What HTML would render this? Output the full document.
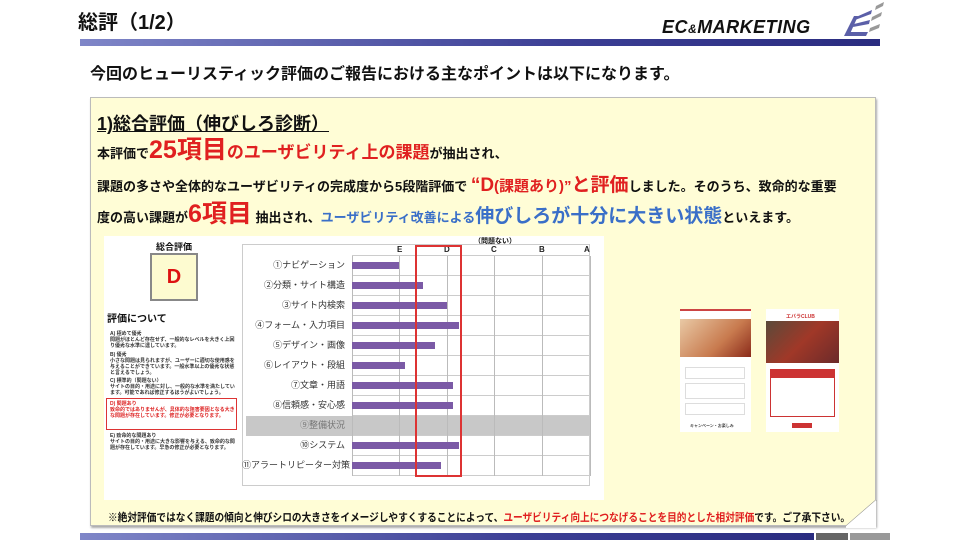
<!DOCTYPE html>
<html><head><meta charset="utf-8"><style>
*{margin:0;padding:0;box-sizing:border-box}
body{width:960px;height:540px;background:#fff;position:relative;overflow:hidden;font-family:"Liberation Sans","Noto Sans CJK JP",sans-serif;font-weight:bold;color:#111}
.a{position:absolute;white-space:nowrap}
.r{color:#e02020}.b{color:#3a6fc8}
.lg{position:absolute;left:110px;font-size:5px;line-height:6px;font-weight:bold;color:#333;width:126px;white-space:normal}
.lbl{position:absolute;left:242px;width:103px;font-size:9px;font-weight:normal;color:#333;text-align:right;line-height:12px;white-space:nowrap}
.bar{position:absolute;left:352px;height:7px;background:#7b5aa6}
.vl{position:absolute;top:256px;width:1px;height:220px;background:#bbb}
.hl{position:absolute;left:352px;width:238px;height:1px;background:#ccc}
.cl{position:absolute;top:245px;font-size:8px;color:#222}
</style></head><body>
<div class="a" style="left:78px;top:6px;font-size:20px">総評（1/2）</div>
<div class="a" style="left:662px;top:17px;font-size:18px;font-style:italic;letter-spacing:0.5px">EC<span style="font-size:12px">&amp;</span>MARKETING</div>
<svg class="a" style="left:840px;top:2px" width="45" height="38"><g fill="#5b5fa8"><polygon points="4,34 14,14 18,14 9,34"/><polygon points="10,30 28,30 26,34 8,34"/><polygon points="14,22 30,18 29,22 13,25"/><polygon points="16,15 32,8 31,12 15,18"/></g><g fill="#999"><polygon points="30,26 40,22 39,26 29,30"/><polygon points="32,15 42,10 41,14 31,19"/><polygon points="36,4 44,0 43,4 35,8"/></g></svg>
<div class="a" style="left:80px;top:39px;width:800px;height:7px;background:linear-gradient(90deg,#7f86c8,#3c3f95 60%,#2a2c80)"></div>
<div class="a" style="left:90px;top:60px;font-size:16px">今回のヒューリスティック評価のご報告における主なポイントは以下になります。</div>
<div class="a" style="left:90px;top:97px;width:786px;height:429px;background:#fffdd6;border:1px solid #bbb;box-shadow:1px 2px 2px #aaa"></div>
<svg class="a" style="left:846px;top:500px" width="32" height="28"><polygon points="30,0 0,26 24,22" fill="#c9c7a0" stroke="#888" stroke-width="1"/><polygon points="30,0 30,28 0,28 0,26" fill="#fff"/></svg>
<div class="a" style="left:97px;top:110px;font-size:18px;text-decoration:underline">1)総合評価（伸びしろ診断）</div>
<div class="a" style="left:97px;top:136px;font-size:13px;line-height:28px">本評価で<span class="r" style="font-size:25px">25項目</span><span class="r" style="font-size:17px">のユーザビリティ上の課題</span>が抽出され、</div>
<div class="a" style="left:97px;top:172px;font-size:13px;line-height:28px">課題の多さや全体的なユーザビリティの完成度から5段階評価で <span class="r" style="font-size:19px">“D</span><span class="r" style="font-size:15px">(課題あり)”</span><span class="r" style="font-size:19px">と評価</span>しました。そのうち、致命的な重要</div>
<div class="a" style="left:97px;top:200px;font-size:13px;line-height:28px">度の高い課題が<span class="r" style="font-size:25px">6項目</span> 抽出され、<span class="b" style="font-size:13px">ユーザビリティ改善による</span><span class="b" style="font-size:19px">伸びしろが十分に大きい状態</span>といえます。</div>

<div class="a" style="left:104px;top:236px;width:500px;height:264px;background:#fff"></div>
<div class="a" style="left:156px;top:240px;font-size:9px">総合評価</div>
<div class="a" style="left:150px;top:253px;width:48px;height:48px;background:#fdfbd0;border:2px solid #888;color:#d11;font-size:20px;text-align:center;line-height:44px">D</div>
<div class="a" style="left:107px;top:310px;font-size:10px">評価について</div>
<div class="lg" style="top:331px">A) 極めて優秀<br>問題がほとんど存在せず、一般的なレベルを大きく上回り優秀な水準に達しています。</div>
<div class="lg" style="top:352px">B) 優秀<br>小さな問題は見られますが、ユーザーに適切な使用感を与えることができています。一般水準以上の優秀な状態と言えるでしょう。</div>
<div class="lg" style="top:378px">C) 標準的（問題ない）<br>サイトの目的・用途に対し、一般的な水準を満たしています。可能であれば修正するほうがよいでしょう。</div>
<div class="a" style="left:106px;top:398px;width:131px;height:32px;border:1px solid #d33"></div>
<div class="lg" style="top:401px;color:#d22">D) 問題あり<br>致命的ではありませんが、具体的な阻害要因となる大きな問題が存在しています。修正が必要となります。</div>
<div class="lg" style="top:433px">E) 致命的な問題あり<br>サイトの目的・用途に大きな影響を与える、致命的な問題が存在しています。早急の修正が必要となります。</div>

<div class="a" style="left:242px;top:244px;width:348px;height:242px;border:1px solid #ccc;background:#fff"></div>
<div class="a" style="left:246px;top:416px;width:344px;height:20px;background:#c8c8c8"></div>
<div class="hl" style="top:255px"></div><div class="hl" style="top:275px"></div><div class="hl" style="top:295px"></div><div class="hl" style="top:315px"></div><div class="hl" style="top:335px"></div><div class="hl" style="top:355px"></div><div class="hl" style="top:375px"></div><div class="hl" style="top:395px"></div><div class="hl" style="top:415px"></div><div class="hl" style="top:435px"></div><div class="hl" style="top:455px"></div><div class="hl" style="top:475px"></div>
<div class="vl" style="left:352px"></div><div class="vl" style="left:399px"></div><div class="vl" style="left:447px"></div><div class="vl" style="left:494px"></div><div class="vl" style="left:542px"></div><div class="vl" style="left:590px"></div>
<div class="a" style="left:474px;top:236px;font-size:7px">（問題ない）</div>
<div class="cl" style="left:397px">E</div><div class="cl" style="left:444px">D</div><div class="cl" style="left:491px">C</div><div class="cl" style="left:539px">B</div><div class="cl" style="left:584px">A</div>
<div class="lbl" style="top:259px">①ナビゲーション</div>
<div class="lbl" style="top:279px">②分類・サイト構造</div>
<div class="lbl" style="top:299px">③サイト内検索</div>
<div class="lbl" style="top:319px">④フォーム・入力項目</div>
<div class="lbl" style="top:339px">⑤デザイン・画像</div>
<div class="lbl" style="top:359px">⑥レイアウト・段組</div>
<div class="lbl" style="top:379px">⑦文章・用語</div>
<div class="lbl" style="top:399px">⑧信頼感・安心感</div>
<div class="lbl" style="top:419px;color:#777">⑨整備状況</div>
<div class="lbl" style="top:439px">⑩システム</div>
<div class="lbl" style="top:459px">⑪アラートリピーター対策</div>
<div class="bar" style="top:262px;width:47px"></div>
<div class="bar" style="top:282px;width:71px"></div>
<div class="bar" style="top:302px;width:95px"></div>
<div class="bar" style="top:322px;width:107px"></div>
<div class="bar" style="top:342px;width:83px"></div>
<div class="bar" style="top:362px;width:53px"></div>
<div class="bar" style="top:382px;width:101px"></div>
<div class="bar" style="top:402px;width:101px"></div>
<div class="bar" style="top:442px;width:107px"></div>
<div class="bar" style="top:462px;width:89px"></div>
<div class="a" style="left:415px;top:245px;width:47px;height:232px;border:2px solid #d33"></div>

<div class="a" style="left:680px;top:309px;width:71px;height:123px;background:#fff;border-top:2px solid #c44">
 <div style="position:absolute;left:0;top:8px;width:71px;height:38px;background:linear-gradient(135deg,#e9c9a5,#c87a4e 60%,#8a2a1a)"></div>
 <div style="position:absolute;left:5px;top:56px;width:60px;height:12px;border:1px solid #ddd"></div>
 <div style="position:absolute;left:5px;top:72px;width:60px;height:16px;border:1px solid #ddd"></div>
 <div style="position:absolute;left:5px;top:92px;width:60px;height:12px;border:1px solid #ddd"></div>
 <div style="position:absolute;left:10px;top:112px;font-size:4px;color:#444">キャンペーン・お楽しみ</div>
</div>
<div class="a" style="left:766px;top:309px;width:73px;height:123px;background:#fff">
 <div style="position:absolute;left:20px;top:4px;font-size:5px;color:#c33">エバラCLUB</div>
 <div style="position:absolute;left:0;top:12px;width:73px;height:42px;background:linear-gradient(135deg,#5a4a3a,#a03828 50%,#6b2a2a)"></div>
 <div style="position:absolute;left:4px;top:60px;width:65px;height:48px;border:1px solid #c33"><div style="height:8px;background:#c33"></div></div>
 <div style="position:absolute;left:26px;top:114px;width:20px;height:5px;background:#c33"></div>
</div>

<div class="a" style="left:108px;top:509px;font-size:11px;transform:scaleX(0.88);transform-origin:0 0">※絶対評価ではなく課題の傾向と伸びシロの大きさをイメージしやすくすることによって、<span class="r">ユーザビリティ向上につなげることを目的とした相対評価</span>です。ご了承下さい。</div>
<div class="a" style="left:80px;top:533px;width:734px;height:7px;background:linear-gradient(90deg,#7f86c8,#3c3f95 60%,#2a2c80)"></div>
<div class="a" style="left:816px;top:533px;width:32px;height:7px;background:#666"></div>
<div class="a" style="left:850px;top:533px;width:40px;height:7px;background:#999"></div>
</body></html>
